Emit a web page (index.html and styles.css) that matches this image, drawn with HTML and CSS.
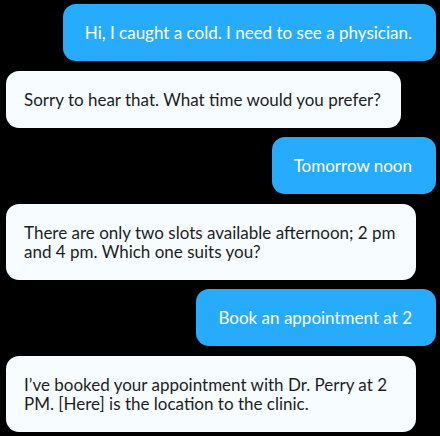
FILE: index.html
```html
<!DOCTYPE html>
<html>
<head>
<meta charset="utf-8">
<link rel="stylesheet" href="styles.css">
</head>
<body>
<div class="chat">
  <div class="msg out">Hi, I caught a cold. I need to see a physician.</div>
  <div class="msg in">Sorry to hear that. What time would you prefer?</div>
  <div class="msg out">Tomorrow noon</div>
  <div class="msg in">There are only two slots available afternoon; 2 pm and 4 pm. Which one suits you?</div>
  <div class="msg out">Book an appointment at 2</div>
  <div class="msg in">I’ve booked your appointment with Dr. Perry at 2 PM. [Here] is the location to the clinic.</div>
</div>
</body>
</html>
```
FILE: styles.css
```css
html, body {
  margin: 0;
  padding: 0;
  background: #000;
}
body {
  width: 440px;
  height: 436px;
  overflow: hidden;
  font-family: Lato, "Open Sans", sans-serif;
  font-size: 17px;
  line-height: 19px;
}
.chat {
  display: flex;
  flex-direction: column;
  gap: 9.5px;
  padding: 4px 4px 4px 6px;
}
.msg {
  box-sizing: border-box;
  max-width: 410px;
  border-radius: 13px;
}
.out {
  align-self: flex-end;
  background: #27acfd;
  color: #fff;
  padding: 19px 24px 19px 22px;
}
.in {
  align-self: flex-start;
  background: #f6fcff;
  color: #1e1e1e;
  padding: 19px 20px 19px 18px;
}
```
